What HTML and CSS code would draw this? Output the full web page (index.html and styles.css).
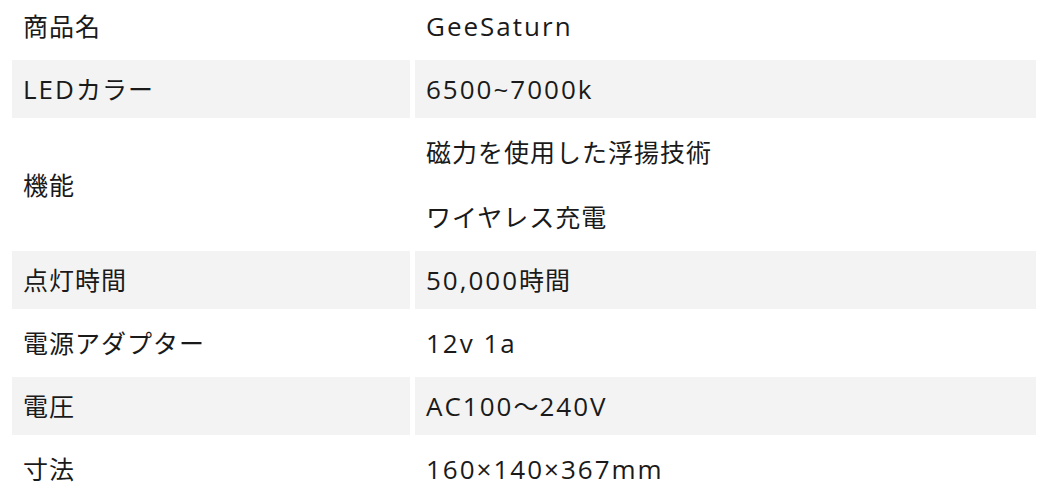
FILE: index.html
```html
<!DOCTYPE html>
<html lang="ja">
<head>
<meta charset="utf-8">
<link rel="stylesheet" href="styles.css">
</head>
<body>
<table class="spec">
  <tbody>
    <tr class="row"><td class="key">商品名</td><td class="val"><span class="en">GeeSaturn</span></td></tr>
    <tr class="row alt"><td class="key"><span class="en">LED</span>カラー</td><td class="val"><span class="en">6500~7000k</span></td></tr>
    <tr class="row tall"><td class="key">機能</td><td class="val"><p class="line">磁力を使用した浮揚技術</p><p class="line">ワイヤレス充電</p></td></tr>
    <tr class="row alt"><td class="key">点灯時間</td><td class="val"><span class="en">50,000</span>時間</td></tr>
    <tr class="row"><td class="key">電源アダプター</td><td class="val"><span class="en">12v 1a</span></td></tr>
    <tr class="row alt"><td class="key">電圧</td><td class="val"><span class="en">AC100</span>〜<span class="en">240V</span></td></tr>
    <tr class="row"><td class="key">寸法</td><td class="val"><span class="en">160×140×367mm</span></td></tr>
  </tbody>
</table>
</body>
</html>
```

FILE: styles.css
```css
html, body {
  margin: 0;
  padding: 0;
  background: #ffffff;
}
body {
  font-family: "Open Sans", "Noto Sans CJK JP", sans-serif;
  color: #1a1a1a;
  overflow: hidden;
}
.spec {
  border-collapse: separate;
  border-spacing: 5px;
  width: 1034px;
  margin: -8px 0 0 7px;
  table-layout: fixed;
}
.key {
  width: 376px;
}
.row td {
  padding: 14px 11px;
  height: 30px;
  font-size: 25px;
  line-height: 30px;
  letter-spacing: 1px;
  vertical-align: middle;
  white-space: nowrap;
}
.key {
  letter-spacing: 0.5px;
}
.en {
  font-size: 26px;
  letter-spacing: 2px;
}
.alt td {
  background: #f3f3f3;
}
.line {
  margin: 0;
}
.line + .line {
  margin-top: 35px;
}
```
